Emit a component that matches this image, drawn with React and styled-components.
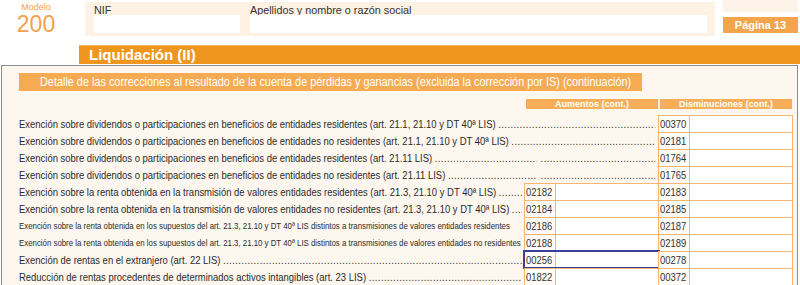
import styled, { createGlobalStyle } from "styled-components";

const GlobalStyle = createGlobalStyle`
  body {
    margin: 0;
    background: #fff;
    font-family: "Liberation Sans Narrow", "Liberation Sans", Arial, sans-serif;
  }
`;

// the form uses a condensed face; squeeze Liberation Sans to its width
const NARROW = 0.86;

const Page = styled.div`
  width: 800px;
  height: 285px;
  overflow: hidden;
  background: #fff;
`;

const Header = styled.div`
  display: flex;
  height: 45px;
`;

const Brand = styled.div`
  width: 72px;
  display: flex;
  flex-direction: column;
  align-items: center;
  color: #f3a24a;
`;

const BrandLabel = styled.div`
  margin-top: 2px;
  font-size: 9px;
  line-height: 10px;
`;

const BrandNumber = styled.div`
  margin-top: 1px;
  font-size: 23px;
  line-height: 23px;
`;

const IdPanel = styled.div`
  margin: 2px 0 0 13px;
  width: 630px;
  height: 34px;
  box-sizing: border-box;
  padding: 3px 8px 0 9px;
  background: #fdf2e4;
  display: flex;
  gap: 10px;
`;

const Field = styled.div`
  width: ${(p) => p.w}px;
  display: flex;
  flex-direction: column;
`;

const FieldLabel = styled.div`
  font-size: 10.8px;
  line-height: 10px;
  height: 10px;
  color: #333;
`;

const FieldInput = styled.div`
  height: 18px;
  background: #fff;
`;

const PageBlock = styled.div`
  margin-left: 8px;
  width: 75px;
  display: flex;
  flex-direction: column;
  gap: 5px;
`;

const Ghost = styled.div`
  height: 12px;
  background: #fdf3e8;
`;

const PageTag = styled.div`
  height: 16px;
  background: #f4a54c;
  color: #fff;
  font-family: "Liberation Sans", Arial, sans-serif;
  font-weight: bold;
  font-size: 11px;
  line-height: 16px;
  text-align: center;
`;

const SectionBar = styled.div`
  margin-left: 79px;
  height: 19px;
  box-sizing: border-box;
  border-top: 1px solid #f6b462;
  background: #f0961e;
  color: #fff;
  font-weight: bold;
  font-size: 15px;
  line-height: 18px;
  padding-left: 10px;
`;

const Main = styled.div`
  margin: 1px 0 0 1px;
  width: 797px;
  box-sizing: border-box;
  border: 1px solid #8c8c8c;
  border-bottom: none;
  background: #fdf7ef;
  padding: 7px 5px 0 17px;
  height: 230px;
`;

const SubHeader = styled.div`
  width: 623px;
  height: 18px;
  background: #f6aa52;
  color: #fff;
  font-size: 12.5px;
  line-height: 18px;
  padding-left: 21px;
  box-sizing: border-box;
  white-space: nowrap;
  overflow: hidden;
`;

const Squeeze = styled.span`
  display: inline-block;
  white-space: nowrap;
  transform: scaleX(${(p) => p.k || NARROW});
  transform-origin: 0 50%;
`;

const Grid = styled.div`
  margin-top: 8px;
  display: grid;
  grid-template-columns: 506px 134px 134px;
`;

const ColHead = styled.div`
  grid-column: ${(p) => p.col};
  height: 10px;
  margin: 0 1px 6px 1px;
  background: #f6ae59;
  color: #fff;
  font-weight: bold;
  font-size: 9px;
  line-height: 10px;
  text-align: center;
`;

const Label = styled.div`
  grid-column: ${(p) => (p.wide ? "1 / span 2" : "1")};
  height: 17px;
  padding-right: ${(p) => (p.wide ? 4 : 3)}px;
  overflow: hidden;
  font-size: ${(p) => (p.small ? 9.5 : 11)}px;
  color: #2a2a2a;
`;

const LabelLine = styled.div`
  width: ${(p) => 100 / p.k}%;
  height: 17px;
  display: flex;
  align-items: center;
  white-space: nowrap;
  transform: scaleX(${(p) => p.k});
  transform-origin: 0 50%;
`;

const LabelText = styled.span`
  flex: none;
`;

const Leader = styled.span`
  flex: ${(p) => (p.w ? "none" : "1")};
  width: ${(p) => (p.w ? `${p.w}px` : "auto")};
  margin-left: ${(p) => p.gap || 3}px;
  overflow: hidden;
  letter-spacing: 0.5px;
  &::before {
    content: "........................................................................................................................................";
  }
`;

const Cell = styled.div`
  grid-column: ${(p) => p.col};
  height: 17px;
  box-sizing: border-box;
  border: 1px solid #f5b76f;
  border-bottom: none;
  margin-left: -1px;
  display: flex;
  outline: ${(p) => (p.active ? "2px solid #3c3f98" : "none")};
  outline-offset: -1px;
`;

const Code = styled.div`
  width: 29px;
  background: #fffcf7;
  font-size: 11px;
  line-height: 16px;
  color: #333;
  padding-left: 1px;
  overflow: hidden;
`;

const Input = styled.div`
  flex: 1;
  border-left: 1px solid #f5b76f;
  background: #fff;
`;

const rows = [
  {
    text: "Exención sobre dividendos o participaciones en beneficios de entidades residentes (art. 21.1, 21.10 y DT 40ª LIS)",
    dis: "00370",
  },
  {
    text: "Exención sobre dividendos o participaciones en beneficios de entidades no residentes (art. 21.1, 21.10 y DT 40ª LIS)",
    dis: "02181",
  },
  {
    text: "Exención sobre dividendos o participaciones en beneficios de entidades residentes (art. 21.11 LIS)",
    dis: "01764",
    split: true,
  },
  {
    text: "Exención sobre dividendos o participaciones en beneficios de entidades no residentes (art. 21.11 LIS)",
    dis: "01765",
    split: true,
  },
  {
    text: "Exención sobre la renta obtenida en la transmisión de valores entidades residentes (art. 21.3, 21.10 y DT 40ª LIS)",
    aum: "02182",
    dis: "02183",
  },
  {
    text: "Exención sobre la renta obtenida en la transmisión de valores entidades no residentes (art. 21.3, 21.10 y DT 40ª LIS)",
    aum: "02184",
    dis: "02185",
  },
  {
    text: "Exención sobre la renta obtenida en los supuestos del art. 21.3, 21.10 y DT 40ª LIS distintos a transmisiones de valores entidades residentes",
    aum: "02186",
    dis: "02187",
    small: true,
  },
  {
    text: "Exención sobre la renta obtenida en los supuestos del art. 21.3, 21.10 y DT 40ª LIS distintos a transmisiones de valores entidades no residentes",
    aum: "02188",
    dis: "02189",
    small: true,
  },
  {
    text: "Exención de rentas en el extranjero (art. 22 LIS)",
    aum: "00256",
    dis: "00278",
    active: true,
  },
  {
    text: "Reducción de rentas procedentes de determinados activos intangibles (art. 23 LIS)",
    aum: "01822",
    dis: "00372",
  },
];

const Row = ({ row }) => {
  const k = row.small ? 0.826 : NARROW;
  return (
    <>
      <Label wide={!row.aum} small={row.small}>
        <LabelLine k={k}>
          <LabelText>{row.text}</LabelText>
          {!row.small && <Leader />}
          {row.split && <Leader w={Math.round(114 / k)} gap={5} />}
        </LabelLine>
      </Label>
      {row.aum && (
        <Cell col="2" active={row.active}>
          <Code>
            <Squeeze>{row.aum}</Squeeze>
          </Code>
          <Input />
        </Cell>
      )}
      <Cell col="3">
        <Code>
          <Squeeze>{row.dis}</Squeeze>
        </Code>
        <Input />
      </Cell>
    </>
  );
};

export default function App() {
  return (
    <Page>
      <GlobalStyle />
      <Header>
        <Brand>
          <BrandLabel>Modelo</BrandLabel>
          <BrandNumber>200</BrandNumber>
        </Brand>
        <IdPanel>
          <Field w={146}>
            <FieldLabel>NIF</FieldLabel>
            <FieldInput />
          </Field>
          <Field w={457}>
            <FieldLabel>Apellidos y nombre o razón social</FieldLabel>
            <FieldInput />
          </Field>
        </IdPanel>
        <PageBlock>
          <Ghost />
          <PageTag>Página 13</PageTag>
        </PageBlock>
      </Header>
      <SectionBar>Liquidación (II)</SectionBar>
      <Main>
        <SubHeader>
          <Squeeze k={0.87}>
            Detalle de las correcciones al resultado de la cuenta de pérdidas y ganancias (excluida la corrección por IS) (continuación)
          </Squeeze>
        </SubHeader>
        <Grid>
          <ColHead col="2">Aumentos (cont.)</ColHead>
          <ColHead col="3">Disminuciones (cont.)</ColHead>
          {rows.map((row) => (
            <Row key={row.dis} row={row} />
          ))}
        </Grid>
      </Main>
    </Page>
  );
}
